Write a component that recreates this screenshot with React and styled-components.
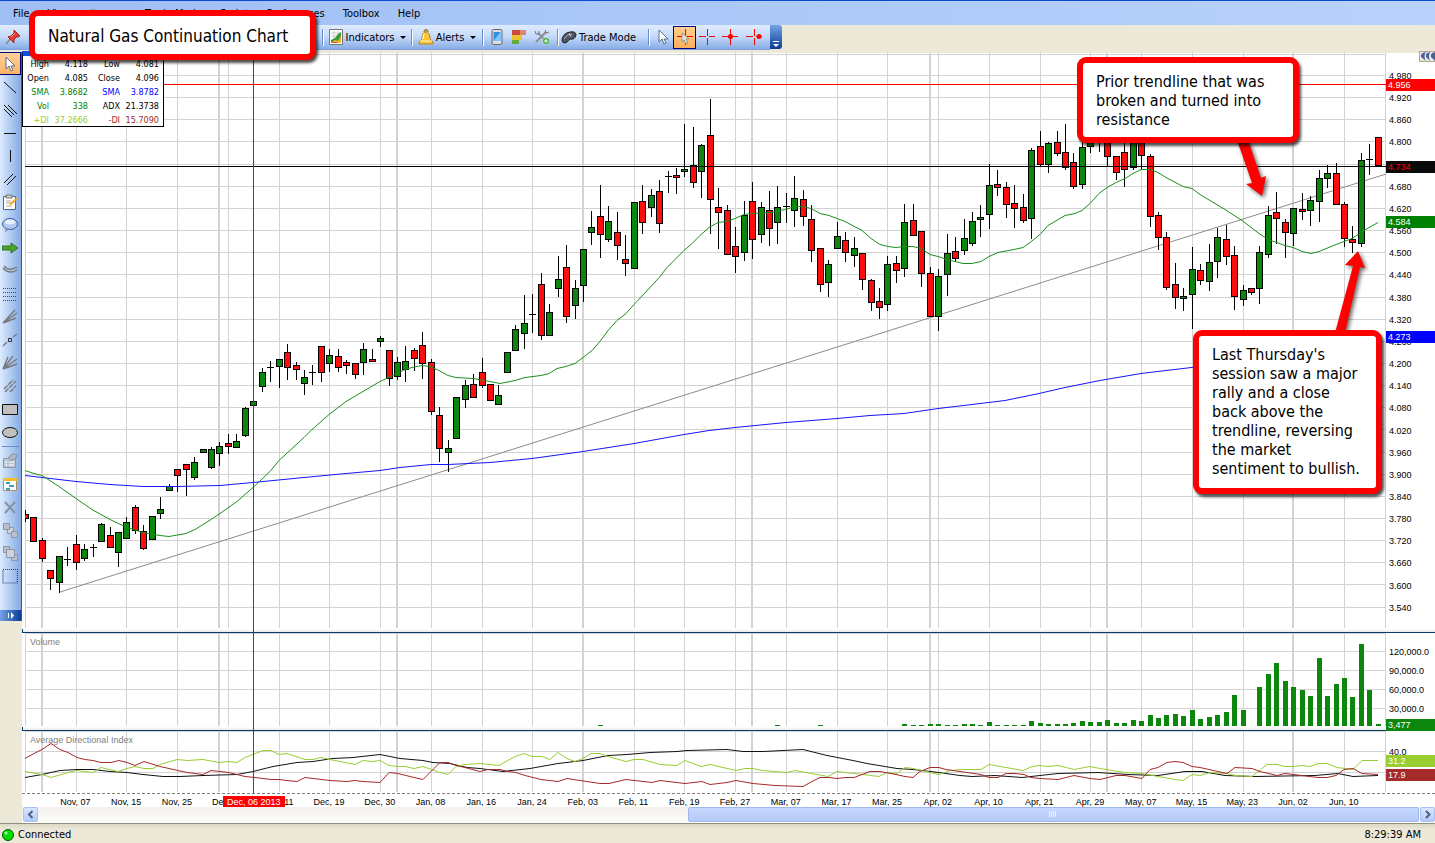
import React from 'react'
import styled, { createGlobalStyle, ThemeProvider } from 'styled-components'

const theme = {
  fontUi: '"DejaVu Sans Condensed", "DejaVu Sans", sans-serif',
  fontAxis: '"Liberation Sans", Arial, sans-serif',
  beige: '#ece9d8',
  grid: '#d3d3d3',
  up: '#0c860c',
  down: '#ff0d0d',
  plusDi: '#9acd32',
  minusDi: '#a52a2a',
  navy: '#0b3a6b',
}

const GlobalStyle = createGlobalStyle`
  * {
    box-sizing: border-box;
  }

  body {
    margin: 0;
    background: #ece9d8;
  }

  button {
    padding: 0;
    border: 0;
    background: none;
    color: inherit;
    font: inherit;
  }
`

/* ---------- chart data ---------- */

// y pixels of [high, open, close, low], one entry for each session
const CANDLES = [
  [510, 514, 518, 521], [517, 517, 541, 541], [538, 540, 558, 561], [570, 570, 578, 589],
  [556, 582, 556, 592], [547, 559, 559, 565], [535, 544, 562, 569], [544, 558, 549, 560],
  [544, 547, 547, 556], [523, 541, 524, 541], [527, 535, 547, 547], [532, 552, 532, 566],
  [517, 538, 522, 538], [505, 507, 530, 533], [525, 531, 548, 549], [516, 539, 516, 539],
  [497, 513, 509, 518], [484, 490, 486, 490], [469, 469, 475, 491], [464, 464, 469, 495],
  [457, 477, 462, 479], [449, 452, 449, 452], [447, 467, 449, 468], [442, 453, 446, 465],
  [434, 443, 446, 453], [434, 447, 441, 447], [407, 435, 408, 436], [401, 405, 401, 405],
  [368, 386, 372, 391], [361, 367, 367, 381], [359, 366, 359, 387], [344, 352, 367, 379],
  [362, 365, 369, 379], [370, 383, 377, 394], [365, 372, 372, 384], [346, 346, 372, 381],
  [349, 363, 355, 371], [349, 356, 367, 371], [360, 362, 365, 373], [363, 363, 374, 378],
  [343, 362, 349, 374], [349, 359, 361, 361], [336, 341, 338, 346], [350, 350, 378, 385],
  [357, 376, 362, 379], [346, 369, 361, 381], [348, 350, 358, 370], [332, 345, 363, 378],
  [359, 362, 411, 414], [407, 415, 448, 461], [440, 452, 448, 471], [397, 438, 397, 438],
  [380, 399, 385, 407], [374, 384, 397, 397], [358, 372, 385, 387], [384, 384, 400, 400],
  [385, 404, 395, 404], [352, 372, 352, 372], [325, 350, 329, 350], [295, 333, 323, 348],
  [294, 314, 314, 332], [273, 284, 335, 339], [304, 335, 312, 335], [256, 288, 279, 296],
  [245, 267, 316, 322], [280, 305, 288, 318], [249, 285, 249, 301], [211, 232, 227, 244],
  [185, 216, 234, 257], [206, 239, 221, 241], [212, 232, 245, 259], [235, 259, 263, 275],
  [202, 268, 202, 268], [185, 201, 222, 233], [189, 207, 195, 216], [180, 191, 223, 232],
  [171, 176, 176, 192], [168, 175, 177, 193], [124, 171, 169, 176], [127, 165, 182, 187],
  [144, 171, 145, 197], [99, 135, 199, 233], [188, 207, 212, 248], [205, 210, 254, 254],
  [227, 246, 256, 272], [201, 252, 215, 260], [182, 201, 239, 258], [202, 234, 207, 242],
  [191, 210, 228, 245], [186, 222, 207, 243], [193, 206, 206, 222], [176, 210, 198, 226],
  [190, 199, 216, 225], [205, 219, 250, 261], [248, 248, 284, 291], [260, 282, 264, 296],
  [222, 248, 236, 248], [232, 240, 252, 261], [237, 255, 248, 266], [253, 253, 279, 289],
  [279, 280, 302, 310], [288, 301, 307, 318], [256, 304, 264, 310], [256, 263, 270, 282],
  [204, 268, 222, 276], [204, 220, 235, 235], [231, 231, 273, 286], [267, 273, 316, 316],
  [269, 316, 276, 330], [234, 274, 253, 295], [237, 251, 258, 261], [219, 250, 238, 254],
  [212, 243, 221, 245], [205, 219, 217, 236], [164, 214, 185, 228], [170, 184, 187, 195],
  [182, 187, 204, 217], [185, 203, 208, 227], [194, 207, 220, 222], [148, 218, 150, 238],
  [131, 146, 164, 166], [142, 164, 143, 172], [131, 142, 153, 155], [124, 152, 167, 169],
  [153, 162, 186, 188], [142, 184, 147, 188], [132, 146, 138, 152], [132, 138, 142, 151],
  [132, 138, 156, 165], [156, 156, 172, 179], [142, 152, 169, 186], [132, 167, 140, 169],
  [132, 138, 155, 168], [154, 156, 216, 226], [212, 215, 237, 249], [232, 237, 287, 289],
  [263, 284, 297, 308], [288, 298, 296, 310], [247, 294, 269, 328], [264, 270, 280, 284],
  [244, 281, 262, 290], [228, 261, 237, 277], [225, 239, 256, 264], [246, 255, 296, 309],
  [285, 299, 290, 305], [288, 288, 292, 294], [246, 288, 252, 303], [206, 254, 215, 257],
  [192, 212, 218, 243], [219, 222, 232, 257], [208, 233, 208, 245], [193, 209, 211, 219],
  [196, 210, 200, 225], [170, 201, 178, 221], [165, 178, 173, 187], [163, 173, 204, 204],
  [202, 204, 238, 246], [226, 239, 242, 252], [153, 243, 160, 246], [144, 159, 159, 174],
  [137, 137, 165, 165],
]

// bar heights, keyed by session; the sessions before are too thin to show
const VOLUME = [
  [68, 1], [89, 1], [94, 1], [104, 2], [105, 1], [106, 1], [107, 2], [108, 2], [109, 1],
  [110, 1], [111, 2], [112, 2], [113, 1], [114, 4], [115, 1], [116, 1], [117, 1], [118, 1],
  [119, 5], [120, 3], [121, 2], [122, 2], [123, 2], [124, 3], [125, 5], [126, 4], [127, 4],
  [128, 6], [129, 3], [130, 3], [131, 6], [132, 5], [133, 11], [134, 8], [135, 11],
  [136, 12], [137, 10], [138, 16], [139, 7], [140, 9], [141, 11], [142, 14], [143, 31],
  [144, 16], [146, 39], [147, 52], [148, 63], [149, 45], [150, 39], [151, 36], [152, 30],
  [153, 68], [154, 30], [155, 42], [156, 48], [157, 29], [158, 82], [159, 36], [160, 2],
]

const SMA_FAST = '25,470 34,473 42,475 59,486 76,498 92,509 110,519 127,527 143,532 160,535 169,536 186,533 195,529 211,519 220,513 237,501 253,487 270,471 279,460 304,437 312,429 329,414 346,401 363,391 380,381 397,373 405,369 412,367 422,365 430,366 439,370 448,375 456,377 473,378 490,381 500,383 515,380 525,377 541,375 549,373 557,368 566,366 575,363 583,357 592,350 600,341 608,330 617,320 626,313 634,304 651,286 660,276 667,267 684,250 692,243 700,235 709,227 718,222 726,221 735,218 744,214 752,213 770,212 786,209 794,206 803,206 811,208 820,213 829,215 845,221 862,230 871,238 880,244 888,246 896,247 904,246 913,246 921,248 930,254 938,256 947,259 955,261 963,263 972,263 981,261 989,256 998,252 1014,249 1023,247 1030,242 1040,234 1048,225 1065,215 1075,213 1082,210 1090,203 1099,193 1107,187 1116,182 1125,178 1133,173 1141,169 1150,169 1158,172 1166,177 1183,186 1192,188 1200,194 1225,209 1242,220 1259,233 1268,239 1285,245 1293,247 1302,251 1311,253 1319,251 1336,244 1352,238 1369,227 1378,222'
const SMA_SLOW = '25,475 42,477 76,481 110,484 143,486 177,486 220,485 253,482 304,477 346,473 380,470 400,467 431,464 448,464 490,462 532,458 583,451 634,443 684,434 709,430 735,427 786,422 837,418 870,415 904,413 938,408 972,404 1005,400 1039,393 1065,387 1100,380 1141,373 1166,370 1200,366'

const ADX = '25,777 42,774 60,770 77,769 93,769 110,771 127,772 143,774 163,776 180,776 203,775 237,774 253,771 273,766 297,762 313,761 333,758 353,757 380,754 400,758 423,760 433,762 450,763 467,767 480,768 503,771 530,768 558,763 583,760 608,755 627,754 650,752 677,751 687,750 727,749 743,751 763,751 803,749 827,755 853,760 867,763 897,768 913,769 939,772 960,775 972,776 995,775 1022,777 1058,773 1098,772 1128,774 1158,775 1185,771 1202,771 1225,775 1255,776 1315,775 1338,773 1353,776 1378,775'
const PLUS_DI = '25,771 42,774 51,777 68,772 77,770 93,772 101,767 118,771 127,768 135,766 144,768 153,768 160,764 177,759 187,760 203,759 219,762 229,761 237,762 245,757 253,754 263,750 271,750 279,754 287,753 305,759 313,759 321,757 330,759 355,764 363,760 372,761 380,760 389,765 398,766 405,766 414,768 423,766 440,772 448,774 456,766 465,764 480,763 499,765 515,756 524,753 532,756 542,756 550,759 558,752 567,758 575,761 583,758 591,753 600,753 608,756 626,761 634,759 643,759 660,764 677,765 685,760 701,766 710,764 736,770 745,768 753,768 762,770 787,772 795,770 828,776 837,771 863,774 879,776 887,772 897,773 905,767 913,768 939,774 950,770 964,769 981,769 989,764 1023,770 1032,766 1039,765 1048,766 1058,765 1074,769 1090,766 1100,768 1125,772 1142,773 1158,776 1175,779 1183,780 1192,774 1200,775 1210,772 1227,773 1235,775 1252,776 1267,764 1277,764 1285,766 1293,766 1302,765 1310,766 1318,763 1327,763 1337,767 1353,769 1362,760 1378,760'
const MINUS_DI = '25,758 34,753 42,749 51,743 60,749 68,752 77,757 85,759 93,760 101,762 111,762 119,760 127,762 135,765 144,761 160,766 187,772 203,774 211,770 229,772 245,776 255,777 271,779 279,779 287,780 297,781 305,777 330,780 347,781 355,780 363,781 380,782 389,772 398,773 414,777 423,779 440,762 448,762 456,765 465,767 480,771 488,769 500,769 508,771 516,772 525,775 533,777 541,779 558,781 567,778 600,783 609,783 626,779 652,782 660,780 685,783 702,781 710,784 727,782 736,780 753,783 775,785 803,786 812,781 820,777 829,777 837,778 846,777 854,777 870,771 880,771 896,774 905,776 913,777 920,771 930,767 939,767 946,769 960,771 981,774 989,777 998,777 1006,773 1015,773 1024,774 1031,777 1040,778 1058,779 1074,775 1090,778 1100,779 1116,775 1125,775 1142,778 1150,769 1158,767 1167,762 1175,761 1183,762 1192,766 1200,767 1227,773 1235,767 1252,768 1260,771 1277,775 1285,773 1318,777 1327,777 1336,775 1344,769 1353,768 1362,773 1378,774'

const MONTH_STARTS = [2, 23, 44, 66, 86, 107, 128, 150]

const DATES = [
  'Nov, 07', 'Nov, 15', 'Nov, 25', 'Dec, 03', 'Dec, 11', 'Dec, 19', 'Dec, 30', 'Jan, 08',
  'Jan, 16', 'Jan, 24', 'Feb, 03', 'Feb, 11', 'Feb, 19', 'Feb, 27', 'Mar, 07', 'Mar, 17',
  'Mar, 25', 'Apr, 02', 'Apr, 10', 'Apr, 21', 'Apr, 29', 'May, 07', 'May, 15', 'May, 23',
  'Jun, 02', 'Jun, 10',
]

const PRICES = Array.from({ length: 25 }, (_, i) => (4.98 - i * 0.06).toFixed(3))
const PRICE_LINES = PRICES.map((_, i) => Math.round(75 + i * 22.15))

const sessionX = i => Math.round(25 + i * 8.455)

/* ---------- shell ---------- */

const Window = styled.div`
  position: relative;
  display: flex;
  flex-direction: column;
  min-height: 100vh;
  overflow: hidden;
  background: ${({ theme }) => theme.beige};
  font-family: ${({ theme }) => theme.fontUi};
  font-size: 11px;
  color: #000;
`

const MenuBar = styled.nav`
  display: flex;
  align-items: center;
  gap: 18px;
  height: 25px;
  padding-left: 13px;
  border-top: 1px solid #0a4bd0;
  background: linear-gradient(90deg, #9ebef5, #b8d2fb);
`

const MenuItem = styled.button`
  color: ${props => (props.$muted ? '#8f8f7c' : '#000')};
`

const ToolRow = styled.div`
  display: flex;
  height: 25px;
`

const Toolbar = styled.div`
  display: flex;
  align-items: center;
  width: 770px;
  height: 25px;
  padding-left: 2px;
  border-bottom: 1px solid #7ba0dc;
  background: linear-gradient(#dfecfe, #c3d9f9 50%, #86ace6);
`

const ToolbarEnd = styled.button`
  width: 12px;
  height: 24px;
  border-radius: 0 3px 3px 0;
  background: linear-gradient(#75a2e6, #0a3b96);
`

const Tool = styled.button`
  display: flex;
  align-items: center;
  justify-content: ${props => (props.$start ? 'flex-start' : 'center')};
  gap: 2px;
  width: ${props => props.$width}px;
  height: 23px;
  border: ${props => (props.$active ? '1px solid #000080' : '0')};
  background: ${props => (props.$active ? 'linear-gradient(#ffcf92, #fdae5a)' : 'none')};
  white-space: nowrap;
`

const HiddenTools = styled.div`
  width: 295px;
`

const Divider = styled.div`
  width: 1px;
  height: 16px;
  margin: 0 3px;
  background: #6a8ccb;
  box-shadow: 1px 1px 0 #fff;
`

const Caret = styled.span`
  margin-left: 4px;
  border: 3px solid transparent;
  border-top-color: #000;
  border-bottom: 0;
`

const Workspace = styled.div`
  display: flex;
  flex: 1;
`

const SideColumn = styled.aside`
  width: 22px;
  padding-top: 2px;
`

const SideBar = styled.div`
  display: flex;
  flex-direction: column;
  border-right: 1px solid #2f5cab;
  background: linear-gradient(90deg, #dcebfe, #84abe3);
`

const SideTool = styled.button`
  display: flex;
  align-items: center;
  justify-content: center;
  height: 23px;
  padding-right: 1px;
  border: ${props => (props.$active ? '1px solid #000080' : '0')};
  border-left: 0;
  background: ${props => (props.$active ? 'linear-gradient(#ffd19a, #fdb266)' : 'none')};
`

const SideDivider = styled.div`
  height: 1px;
  margin: 3px 2px 2px;
  background: #6a8ccb;
`

const SideEnd = styled.button`
  display: flex;
  align-items: center;
  justify-content: center;
  height: 11px;
  margin-top: 23px;
  background: linear-gradient(90deg, #75a2e6, #0a3b96);
`

const ChartColumn = styled.main`
  position: relative;
  display: flex;
  flex-direction: column;
  flex: 1;
  min-width: 0;
  border-top: 3px solid ${({ theme }) => theme.beige};
  background: #fff;
`

const Panel = styled.section`
  position: relative;
  display: flex;
  flex: ${props => (props.$height ? `0 0 ${props.$height}px` : '1 0 500px')};
  padding-left: 3px;
`

const Plot = styled.div`
  position: relative;
  flex: 1;
  min-width: 0;

  & > svg {
    position: absolute;
    width: 100%;
    height: 100%;
  }
`

const PanelTitle = styled.h2`
  position: absolute;
  top: 3px;
  left: 5px;
  margin: 0;
  color: #808080;
  font-family: ${({ theme }) => theme.fontAxis};
  font-size: 9px;
  font-weight: 400;
  line-height: 12px;
`

const Splitter = styled.div`
  height: 4px;
  border-bottom: 1px solid ${({ theme }) => theme.navy};
  border-left: 1px solid ${({ theme }) => theme.navy};
  background: linear-gradient(#fff, #e8e8e4);
`

const Axis = styled.div`
  position: relative;
  display: flex;
  flex-direction: column;
  justify-content: space-between;
  width: 49px;
  padding: ${props => props.$pad} 0 ${props => props.$padBottom} 3px;
  font-family: ${({ theme }) => theme.fontAxis};
  font-size: 9px;
  line-height: 12px;
`

const AxisTag = styled.div`
  position: absolute;
  left: 0;
  right: 0;
  z-index: 1;
  height: 12px;
  padding-left: 2px;
  background: ${props => props.$fill};
  color: ${props => props.$color || '#fff'};
`

const DateAxis = styled.div`
  position: relative;
  display: flex;
  height: 14px;
  padding: 2px 66px 0 28px;
  border-top: 1px dashed #808080;
  font-family: ${({ theme }) => theme.fontAxis};
  font-size: 9px;
  line-height: 12px;
`

const DateLabel = styled.span`
  flex: 1;
  text-align: center;
  white-space: nowrap;
`

const DateTag = styled.span`
  position: absolute;
  top: 2px;
  left: 16.4%;
  width: 62px;
  height: 11px;
  transform: translateX(-50%);
  background: #f00;
  color: #fff;
  text-align: center;
  white-space: nowrap;
`

const Crosshair = styled.div`
  position: absolute;
  top: 0;
  bottom: 30px;
  left: 16.35%;
  width: 1px;
  background: #f00000;
`

const ScrollBar = styled.div`
  display: flex;
  gap: 1px;
  height: 16px;
  padding-left: 1px;
  background: linear-gradient(#f3f1ec, #fefefb);
`

const ScrollButton = styled.button`
  display: flex;
  align-items: center;
  justify-content: center;
  width: 15px;
  height: 15px;
  border: 1px solid #a9c0f2;
  border-radius: 2px;
  background: linear-gradient(#dbe6ff, #b4cafa);
`

const ScrollTrack = styled.div`
  flex: 1;
  display: flex;
  justify-content: flex-end;
`

const ScrollThumb = styled.div`
  display: flex;
  align-items: center;
  justify-content: center;
  width: 53%;
  height: 15px;
  border: 1px solid #9db9ee;
  border-radius: 2px;
  background: linear-gradient(#c9d9ff, #b3c9f7);
`

const StatusBar = styled.footer`
  display: flex;
  align-items: center;
  justify-content: space-between;
  height: 20px;
  padding: 2px 14px 0 2px;
  border-top: 1px solid #918f80;
  background: linear-gradient(#dcd8c5, #ece9d8 30%);
`

const Status = styled.span`
  display: flex;
  align-items: center;
  gap: 4px;
`

const CollapseButton = styled.button`
  position: absolute;
  top: -2px;
  right: 0;
  z-index: 1;
  display: flex;
  width: 16px;
  height: 11px;
  border: 1px solid #aca899;
  border-right: 0;
  background: ${({ theme }) => theme.beige};
`

const QuoteBox = styled.div`
  position: absolute;
  top: -2px;
  left: 0;
  z-index: 1;
  width: 142px;
  height: 76px;
  border: 1px solid #000;
  border-top: 5px solid #0b50e0;
  background: #fff;
`

const QuoteTable = styled.table`
  width: 137px;
  margin-top: 1px;
  border-collapse: collapse;
  table-layout: fixed;
  font-size: 9px;
  line-height: 14px;

  th,
  td {
    width: 39px;
    padding: 0 1px 0 0;
    font-weight: 400;
    text-align: right;
  }

  th {
    width: 27px;
  }

  td:nth-child(3) {
    width: 32px;
  }
`

const QuoteRow = styled.tr`
  color: ${props => props.$color || '#000'};
`

const QuoteCell = styled.td`
  color: ${props => props.$color || 'inherit'};
`

const Callout = styled.div`
  position: absolute;
  top: ${props => props.$top}px;
  ${props => (props.$left ? `left: ${props.$left}px` : `right: ${props.$right}px`)};
  z-index: 3;
  width: ${props => props.$width}px;
  padding: ${props => props.$pad};
  border: 6px solid #f00;
  border-radius: 9px;
  background: #fff;
  box-shadow: 2px 3px 3px rgba(0, 0, 0, 0.7);
  font-size: ${props => props.$size}px;
  line-height: ${props => (props.$size > 16 ? 20 : 19)}px;
  white-space: pre-line;
`

const Arrows = styled.svg`
  position: absolute;
  top: 140px;
  right: 55px;
  z-index: 2;
  filter: drop-shadow(2px 2px 2px rgba(0, 0, 0, 0.6));
`

/* ---------- icons ---------- */

const Icon = ({ children, size = 16 }) => (
  <svg width={size} height={size} viewBox="0 0 16 16" fill="none" aria-hidden="true">
    {children}
  </svg>
)

const PointerIcon = () => (
  <Icon>
    <path d="M4 1v12l3-3 2 5 2-1-2-4h4z" fill="#fff" stroke="#5c6f8c" />
  </Icon>
)

const PinIcon = () => (
  <Icon>
    <path d="M1 15l5-6" stroke="#888" strokeWidth="1.5" />
    <path d="M9 1l6 6-2 1-2 0-2 3 0 3-6-6 3-1 3-3z" fill="#e0403a" stroke="#b02020" />
    <path d="M6 8l4-4" stroke="#f9a09a" />
  </Icon>
)

const IndicatorIcon = () => (
  <Icon>
    <path d="M1.5.5h13v15h-13z" fill="#fff" stroke="#777" />
    <path d="M3 4h10M3 7h10M6 2v9M10 2v9" stroke="#ccc" />
    <path d="M3 14v-3l4-2 3-4 3-2v11z" fill="#3a9a3a" />
    <path d="M3 14l4-3 3 1 3-5v7z" fill="#f3b52f" />
    <path d="M3 14l5-1 2 1z" fill="#d22" />
  </Icon>
)

const BellIcon = () => (
  <Icon>
    <path d="M6 3q0-2.500 2-2.500t2 2.500" stroke="#8a6a20" fill="#cfa85a" />
    <path d="M4 10q0-7 4-7t4 7l3 3v2H1v-2z" fill="#fbc43a" stroke="#b8821a" />
    <path d="M6 5q-1 2-1 5" stroke="#fff0b0" strokeWidth="1.500" />
    <path d="M2 12h12" stroke="#fff0b0" />
  </Icon>
)

const PhoneIcon = () => (
  <Icon>
    <rect x="3" y=".5" width="10" height="15" rx="1.500" fill="#ddd" stroke="#666" />
    <path d="M4.500 3h7v9h-7z" fill="#2d8fe6" />
    <path d="M4.500 12l7-9v9z" fill="#7fc9ff" />
  </Icon>
)

const HeatIcon = () => (
  <Icon>
    <path d="M1 1h14v5H1z" fill="#c94a3c" />
    <path d="M9 1h6v5H9z" fill="#dd8378" />
    <path d="M1 6h10v5H1z" fill="#ecc12f" />
    <path d="M1 11h7v4H1z" fill="#67a83a" />
  </Icon>
)

const ToolsIcon = () => (
  <Icon>
    <path d="M2 13L12 3M4 4l7 7" stroke="#8a8f94" strokeWidth="2" />
    <path d="M1 2l1 3 3 0 0-3M11 1l1 3 3-1" stroke="#777" />
    <circle cx="12" cy="12" r="3.500" fill="#3fa63f" stroke="#fff" strokeWidth=".5" />
    <path d="M12 10v4M10 12h4" stroke="#fff" />
  </Icon>
)

const MouseIcon = () => (
  <Icon>
    <path d="M1 11Q2 4 9 3q6-1 6 3-1 5-6 4-2 3-5 4-3 0-3-3z" fill="#4d5563" stroke="#222" />
    <path d="M3 10q3-5 8-5M8 4l2 4" stroke="#b9c1cf" />
  </Icon>
)

const CrossIcon = ({ dot, pointer }) => (
  <Icon>
    <g shapeRendering="crispEdges" fill="#f00">
      <path d="M8 0h1v7H8zM8 9h1v7H8zM0 7h7v1H0zM10 7h6v1h-6z" />
    </g>
    {dot !== undefined && <circle cx={dot} cy="7.500" r="2.500" fill="#f00" />}
    {pointer && <path d="M5 4v9l2-2 2 4 2-1-2-4h3z" fill="#e8e0d8" stroke="#998" />}
  </Icon>
)

const stroke = { stroke: '#111', strokeWidth: 1 }
const soft = { stroke: '#77797d', strokeWidth: 1.4 }

const SIDE_TOOLS = [
  ['Pointer', <PointerIcon />],
  ['Trend line', <Icon><path d="M2 3l12 11" {...stroke} /></Icon>],
  ['Channel', <Icon><path d="M2 3l10 10M6 3l9 9M2 7l8 8" {...stroke} /></Icon>],
  ['Horizontal line', <Icon><path d="M2 8.500h12" {...stroke} /></Icon>],
  ['Vertical line', <Icon><path d="M8.500 2v12" {...stroke} /></Icon>],
  ['Parallel lines', <Icon><path d="M2 12L11 3M5 14l9-9" {...stroke} /></Icon>],
  ['Note', <Icon><path d="M1.500 2.500h12v13h-12z" fill="#fff" stroke="#47689c" /><path d="M4 1h6v3H4z" fill="#ccc" stroke="#777" /><path d="M4 7h5M4 9h4M4 12h6" stroke="#aaa" /><path d="M7 10l7-6 2 1-7 6z" fill="#f6a01d" /></Icon>],
  ['Comment', <Icon><ellipse cx="8" cy="7" rx="7.500" ry="5.500" fill="#b5c8ee" stroke="#4458a3" /><path d="M4 11l-1 4 5-3z" fill="#7b8fc8" /><ellipse cx="8" cy="5" rx="5" ry="2.500" fill="#e8f0ff" /></Icon>],
  ['Arrow', <Icon><path d="M0 6h9V3l7 5-7 5v-3H0z" fill="#4aa52a" stroke="#35761f" /></Icon>],
  ['Arc', <Icon><path d="M1 5q6 7 14 2M2 3q5 6 13 1" {...soft} /></Icon>],
  ['Levels', <Icon><path d="M1 2.500h14M1 6.500h14M1 10.500h14M1 14.500h14" stroke="#445" strokeDasharray="1 1" /></Icon>],
  ['Fan', <Icon><path d="M1 14L13 1M1 14L15 4M1 14L14 9" {...soft} /></Icon>],
  ['Pivot', <Icon><path d="M1 14l4-4M11 5l4-3" {...soft} /><path d="M6.500 6.500h3v3h-3z" stroke="#333" /></Icon>],
  ['Speed fan', <Icon><path d="M1 14L6 2M1 14L11 1M1 14L15 4M1 14L15 9" {...soft} /></Icon>],
  ['Pitchfork', <Icon><path d="M2 11l9-9M3 14L14 3M8 14l6-6" {...soft} strokeDasharray="5 1" /></Icon>],
  ['Rectangle', <Icon><path d="M.5 3.500h15v10H.5z" fill="#c0c0c0" stroke="#111" /></Icon>],
  ['Ellipse', <Icon><ellipse cx="8" cy="8.500" rx="7.500" ry="5" fill="#c0c0c0" stroke="#111" /></Icon>],
]

const EDIT_TOOLS = [
  ['Properties', <Icon><path d="M1.500 5.500h12v9h-12z" fill="#bcc6d4" stroke="#8c96a8" /><path d="M6 5l4-4 5 1-1 3-5 3z" fill="#aeb6c2" stroke="#8c96a8" /><path d="M3 9h2M7 9h5M3 12h2M7 12h5" stroke="#fff" /></Icon>],
  ['Objects', <Icon><path d="M1.500 2.500h13v12h-13z" fill="#fff" stroke="#a3916a" /><path d="M1 2h14v3H1z" fill="#f6bc2e" /><path d="M4 7h4M7 10h5M4 13h4" stroke="#38a0b8" strokeWidth="2" /></Icon>],
  ['Delete', <Icon><path d="M3 3l10 11M13 3L3 14" stroke="#8791a2" strokeWidth="2" /></Icon>],
  ['Send back', <Icon><path d="M5.500 5.500h6v6h-6z" fill="#ced3db" stroke="#8c96a8" /><path d="M1.500 1.500h6v6h-6z" fill="#b9c0cb" stroke="#8c96a8" /><path d="M9.500 9.500h6v6h-6z" fill="#b9c0cb" stroke="#8c96a8" /></Icon>],
  ['Bring front', <Icon><path d="M1.500 1.500h6v6h-6z" fill="#b9c0cb" stroke="#8c96a8" /><path d="M9.500 9.500h6v6h-6z" fill="#b9c0cb" stroke="#8c96a8" /><path d="M4.500 4.500h8v8h-8z" fill="#ced3db" stroke="#8c96a8" /></Icon>],
  ['Select area', <Icon><path d="M1 1.500h14.500V15H1z" stroke="#223d7c" strokeWidth="1.200" strokeDasharray="1 1" /></Icon>],
]

/* ---------- chart ---------- */

const Grid = ({ top, bottom, lines }) => (
  <g shapeRendering="crispEdges" fill={theme.grid}>
    {lines.map(y => <rect key={y} x="25" y={y} width="1361" height="1" />)}
    {DATES.map((d, i) => (
      <rect key={d} x={sessionX((i + 1) * 6)} y={top} width="1" height={bottom - top} />
    ))}
    {MONTH_STARTS.map(i => (
      <rect key={i} x={sessionX(i) - 1} y={top} width="2" height={bottom - top} />
    ))}
    <rect x="25" y={top} width="1" height={bottom - top} />
    <rect x="1385" y={top} width="1" height={bottom - top} />
  </g>
)

const Candle = ({ index, data }) => {
  const [high, open, close, low] = data
  const x = sessionX(index)
  const top = Math.min(open, close)
  const height = Math.abs(open - close)
  return (
    <g>
      <rect x={x} y={high} width="1" height={low - high + 1} fill="#000" />
      {height === 0 && <rect x={x - 3} y={top} width="7" height="1" fill="#000" />}
      {height > 0 && (
        <rect
          x={x - 2.5}
          y={top + 0.5}
          width="6"
          height={height}
          fill={close < open ? theme.up : theme.down}
          stroke="#000"
        />
      )}
    </g>
  )
}

const Line = ({ points, color }) => (
  <polyline points={points} fill="none" stroke={color} transform="translate(0 .5)" />
)

// share of the price panel above a tag
const tagTop = y => ({ top: `${((y - 53) / 576) * 100}%` })

const PricePanel = () => (
  <Panel>
    <Plot>
      <svg viewBox="25 53 1361 576" preserveAspectRatio="none">
        <Grid top={53} bottom={628} lines={[54, ...PRICE_LINES]} />
        <line x1="60" y1="592" x2="1386" y2="174" stroke="#8c8c8c" />
        <g shapeRendering="crispEdges">
          {CANDLES.map((c, i) => <Candle key={i} index={i} data={c} />)}
          <rect x="25" y="84" width="1361" height="1" fill="#f00" />
          <rect x="25" y="166" width="1361" height="1" fill="#000" />
        </g>
        <Line points={SMA_SLOW} color="#1414ff" />
        <Line points={SMA_FAST} color="#1c8f1c" />
      </svg>
    </Plot>
    <Axis $pad="17px" $padBottom="15px">
      {PRICES.map(p => <span key={p}>{p}</span>)}
      <AxisTag $fill="#f00" style={tagTop(79)}>4.956</AxisTag>
      <AxisTag $fill="#0a0a0a" $color="#f00" style={tagTop(161)}>4.734</AxisTag>
      <AxisTag $fill="#008000" style={tagTop(216)}>4.584</AxisTag>
      <AxisTag $fill="#0000ff" style={tagTop(331)}>4.273</AxisTag>
    </Axis>
  </Panel>
)

const VolumePanel = () => (
  <Panel $height={94}>
    <Plot>
      <svg viewBox="25 633 1361 94" preserveAspectRatio="none">
        <Grid top={633} bottom={726} lines={[633, 651, 670, 689, 708]} />
        <g fill={theme.up} shapeRendering="crispEdges">
          {VOLUME.map(([i, h]) => (
            <rect key={i} x={sessionX(i) - 2} y={726 - h} width="5" height={h} />
          ))}
        </g>
      </svg>
      <PanelTitle>Volume</PanelTitle>
    </Plot>
    <Axis $pad="13px" $padBottom="12px">
      {['120,000.0', '90,000.0', '60,000.0', '30,000.0'].map(v => <span key={v}>{v}</span>)}
      <AxisTag $fill="#0c860c" style={{ top: 86 }}>3,477</AxisTag>
    </Axis>
  </Panel>
)

const AdxPanel = () => (
  <Panel $height={62}>
    <Plot>
      <svg viewBox="25 731 1361 62" preserveAspectRatio="none">
        <Grid top={732} bottom={792} lines={[731, 751, 772]} />
        <Line points={ADX} color="#111" />
        <Line points={PLUS_DI} color={theme.plusDi} />
        <Line points={MINUS_DI} color={theme.minusDi} />
      </svg>
      <PanelTitle>Average Directional Index</PanelTitle>
    </Plot>
    <Axis $pad="15px" $padBottom="0">
      <span>40.0</span>
      <AxisTag $fill={theme.plusDi} style={{ top: 24 }}>31.2</AxisTag>
      <AxisTag $fill={theme.minusDi} style={{ top: 38 }}>17.9</AxisTag>
    </Axis>
  </Panel>
)

const QUOTES = [
  ['High', '4.118', 'Low', '4.081'],
  ['Open', '4.085', 'Close', '4.096'],
  ['SMA', '3.8682', 'SMA', '3.8782', '#008000', '#0000ff'],
  ['Vol', '338', 'ADX', '21.3738', '#008000', '#000'],
  ['+DI', '37.2666', '-DI', '15.7090', theme.plusDi, theme.minusDi],
]

const Quotes = () => (
  <QuoteBox>
    <QuoteTable>
      <tbody>
        {QUOTES.map(([a, av, b, bv, left, right]) => (
          <QuoteRow key={a} $color={left}>
            <th scope="row">{a}</th>
            <QuoteCell>{av}</QuoteCell>
            <QuoteCell $color={right}>{b}</QuoteCell>
            <QuoteCell $color={right}>{bv}</QuoteCell>
          </QuoteRow>
        ))}
      </tbody>
    </QuoteTable>
  </QuoteBox>
)

const Chart = () => (
  <ChartColumn>
    <PricePanel />
    <Splitter />
    <VolumePanel />
    <Splitter />
    <AdxPanel />
    <DateAxis>
      {DATES.map(d => <DateLabel key={d}>{d}</DateLabel>)}
      <DateTag>Dec, 06 2013</DateTag>
    </DateAxis>
    <Crosshair />
    <ScrollBar>
      <ScrollButton aria-label="Scroll left">
        <svg width="7" height="9"><path d="M5.500 1L2 4.500 5.500 8" fill="none" stroke="#4d6185" strokeWidth="2" /></svg>
      </ScrollButton>
      <ScrollTrack>
        <ScrollThumb>
          <svg width="8" height="7"><path d="M.5 0v6M2.500 0v6M4.500 0v6M6.500 0v6" stroke="#eef4fe" /></svg>
        </ScrollThumb>
      </ScrollTrack>
      <ScrollButton aria-label="Scroll right">
        <svg width="7" height="9"><path d="M2 1l3.500 3.500L2 8" fill="none" stroke="#4d6185" strokeWidth="2" /></svg>
      </ScrollButton>
    </ScrollBar>
    <Quotes />
    <CollapseButton aria-label="Expand panel">
      <svg width="15" height="9"><path d="M6 0Q0 1 1 5l5 4Q3 4 6 0zM10 0Q5 1 6 5l4 4Q8 4 10 0zM15 0q-5 1-4 5l4 4z" fill="#4663a0" /></svg>
    </CollapseButton>
  </ChartColumn>
)

const App = () => (
  <ThemeProvider theme={theme}>
    <GlobalStyle />
    <Window>
      <MenuBar>
        <MenuItem>File</MenuItem>
        <MenuItem>View</MenuItem>
        <MenuItem $muted>Custom</MenuItem>
        <MenuItem>Trade Mode</MenuItem>
        <MenuItem>Script</MenuItem>
        <MenuItem>Preferences</MenuItem>
        <MenuItem>Toolbox</MenuItem>
        <MenuItem>Help</MenuItem>
      </MenuBar>
      <ToolRow>
        <Toolbar>
          <Tool $width={22} aria-label="Pin"><PinIcon /></Tool>
          <HiddenTools />
          <Divider />
          <Tool $width={82}><IndicatorIcon />Indicators<Caret /></Tool>
          <Divider />
          <Tool $width={64}><BellIcon />Alerts<Caret /></Tool>
          <Divider />
          <Tool $width={21} aria-label="Mobile"><PhoneIcon /></Tool>
          <Tool $width={23} aria-label="Heat map"><HeatIcon /></Tool>
          <Tool $width={24} aria-label="Settings"><ToolsIcon /></Tool>
          <Divider />
          <Tool $width={84} $start><MouseIcon />Trade Mode</Tool>
          <Divider />
          <Tool $width={21} aria-label="Pointer"><PointerIcon /></Tool>
          <Tool $width={23} $active aria-label="Pointer cross"><CrossIcon pointer /></Tool>
          <Tool $width={22} aria-label="Cross"><CrossIcon /></Tool>
          <Tool $width={24} aria-label="Cross centre"><CrossIcon dot={8.5} /></Tool>
          <Tool $width={24} aria-label="Cross right"><CrossIcon dot={13} /></Tool>
        </Toolbar>
        <ToolbarEnd aria-label="More tools">
          <svg width="12" height="24"><path d="M3 16.500h6" stroke="#fff" /><path d="M3 19h6l-3 3z" fill="#fff" /></svg>
        </ToolbarEnd>
      </ToolRow>
      <Workspace>
        <SideColumn>
          <SideBar>
            {SIDE_TOOLS.map(([name, icon], i) => (
              <SideTool key={name} aria-label={name} $active={i === 0}>{icon}</SideTool>
            ))}
            <SideDivider />
            {EDIT_TOOLS.map(([name, icon]) => (
              <SideTool key={name} aria-label={name}>{icon}</SideTool>
            ))}
            <SideEnd aria-label="More drawing tools">
              <svg width="8" height="7"><path d="M1.500 1v5" stroke="#fff" /><path d="M4 0v7l3-3.500z" fill="#fff" /></svg>
            </SideEnd>
          </SideBar>
        </SideColumn>
        <Chart />
      </Workspace>
      <StatusBar>
        <Status>
          <svg width="12" height="12"><circle cx="6" cy="6" r="5.500" fill="#00e000" stroke="#065506" /><circle cx="4" cy="4" r="1.500" fill="#b6ffb6" /></svg>
          Connected
        </Status>
        <time>8:29:39 AM</time>
      </StatusBar>
      <Arrows width="140" height="195" viewBox="1240 140 140 195" overflow="visible">
        <path d="M1237 140l15 43-6 1 16 12 4-20-5 2-13-38z" fill="#f00" />
        <path d="M1335 333l18-67-8-1 13-14 7 17-5-1-15 66z" fill="#f00" />
      </Arrows>
      <Callout $top={10} $left={29} $width={287} $size={17} $pad="10px 13px 8px">
        Natural Gas Continuation Chart
      </Callout>
      <Callout $top={57} $right={136} $width={222} $size={16} $pad="9px 13px 8px">
        {'Prior trendline that was\nbroken and turned into\nresistance'}
      </Callout>
      <Callout $top={330} $right={53} $width={189} $size={16} $pad="9px 13px 10px">
        {"Last Thursday's\nsession saw a major\nrally and a close\nback above the\ntrendline, reversing\nthe market\nsentiment to bullish."}
      </Callout>
    </Window>
  </ThemeProvider>
)

export default App
